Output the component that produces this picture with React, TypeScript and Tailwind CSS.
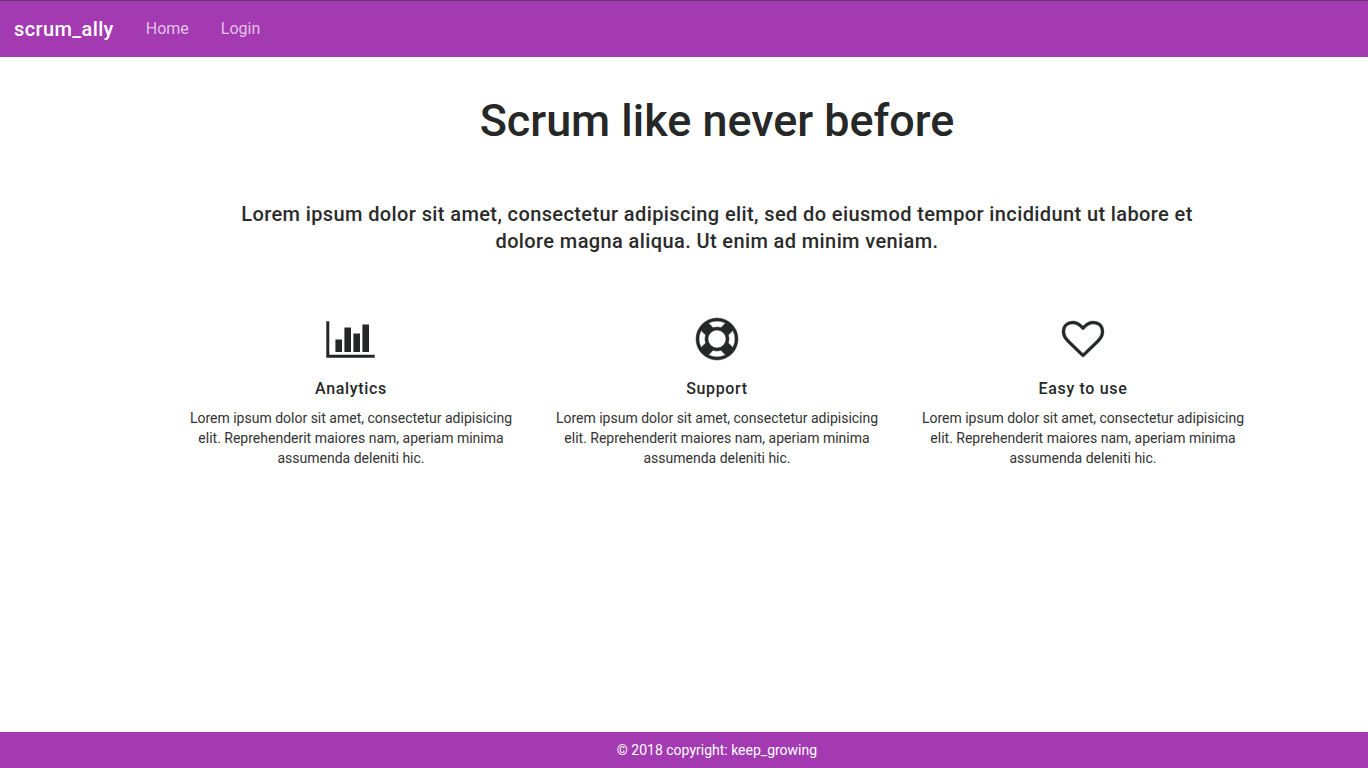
import type { ReactNode } from "react";

const blurb =
  "Lorem ipsum dolor sit amet, consectetur adipisicing elit. Reprehenderit maiores nam, aperiam minima assumenda deleniti hic.";

function BarChart() {
  return (
    <svg width="49" height="37" viewBox="0 0 49 37" fill="currentColor" className="mr-[2px]">
      <path d="M0.300 0.200h3v33.600h45.400v3H0.300zM9.400 18.400h6.600V31H9.400zM18.400 6.400h6.600V31h-6.600zM27.400 12.400h6.600V31h-6.600zM36.400 3.400h6.600V31h-6.600z" />
    </svg>
  );
}

function LifeRing() {
  return (
    <svg width="42" height="42" viewBox="0 0 1792 1792" fill="currentColor" stroke="currentColor" strokeWidth="20" className="mb-px overflow-visible">
      <path d="M896 0q182 0 348 71t286 191 191 286 71 348-71 348-191 286-286 191-348 71-348-71-286-191-191-286T0 896t71-348 191-286T548 71 896 0zm0 128q-190 0-361 90l194 194q82-28 167-28t167 28l194-194q-171-90-361-90zM218 1257l194-194q-28-82-28-167t28-167L218 535q-90 171-90 361t90 361zm678 407q190 0 361-90l-194-194q-82 28-167 28t-167-28l-194 194q171 90 361 90zm0-384q159 0 271.500-112.500T1280 896t-112.500-271.500T896 512 624.500 624.500 512 896t112.500 271.500T896 1280zm484-217l194 194q90-171 90-361t-90-361l-194 194q28 82 28 167t-28 167z" />
    </svg>
  );
}

function Heart() {
  return (
    <svg width="42" height="36" viewBox="0 0 1792 1536" fill="currentColor" stroke="currentColor" strokeWidth="16" className="mb-px overflow-visible">
      <path d="M1664 468q0-81-21.500-143t-55-98.500-81.500-59.500-94-31-98-8-112 25.500-110.500 64-86.500 72-60 61.500q-18 22-49 22t-49-22q-24-28-60-61.500t-86.500-72-110.500-64T478 128t-98 8-94 31-81.500 59.500-55 98.500T128 468q0 168 187 355l581 560 580-559q188-188 188-356zm128 0q0 221-229 450l-623 600q-18 18-44 18t-44-18L228 916q-10-8-27.500-26T145 824.500 77 727 23.500 606 0 468q0-220 127-344T478 0q62 0 126.500 21.500t120 58T820 148t76 68q36-36 76-68t95.500-68.500 120-58T1314 0q224 0 351 124t127 344z" />
    </svg>
  );
}

function Feature({ icon, title }: { icon: ReactNode; title: string }) {
  return (
    <section className="flex flex-col items-center text-center">
      <div className="flex h-[43px] items-center">{icon}</div>
      <h5 className="mt-[18px] text-[16px] leading-[20px] font-medium tracking-[0.65px]">{title}</h5>
      <p className="mt-[9px] w-[336px] text-[14px] leading-[20px] text-[#333333]">{blurb}</p>
    </section>
  );
}

export default function App() {
  return (
    <div className="flex h-screen flex-col overflow-hidden bg-white font-[Roboto,sans-serif] text-[#262828]">
      <nav className="flex h-[57px] shrink-0 items-center border-t border-[#6b3276] bg-[#a33ab2] pl-[14px] text-white">
        <a className="text-[20px] font-medium tracking-[0.37px]">scrum_ally</a>
        <a className="ml-8 text-[16px] text-white/70">Home</a>
        <a className="ml-8 text-[16px] text-white/70">Login</a>
      </nav>
      <main className="flex-1 pl-[168px] pr-[102px]">
        <h1 className="mt-[37px] text-center text-[44.9px] leading-[54px] font-medium">Scrum like never before</h1>
        <h4 className="mx-auto mt-[53px] w-[980px] text-center text-[20px] leading-[27px] font-medium tracking-[0.39px] text-[#2b2b2b]">
          Lorem ipsum dolor sit amet, consectetur adipiscing elit, sed do eiusmod tempor incididunt ut labore et dolore magna aliqua. Ut enim ad minim veniam.
        </h4>
        <div className="mt-[63px] grid grid-cols-3">
          <Feature icon={<BarChart />} title="Analytics" />
          <Feature icon={<LifeRing />} title="Support" />
          <Feature icon={<Heart />} title="Easy to use" />
        </div>
      </main>
      <footer className="flex h-[36px] shrink-0 items-center justify-center bg-[#a33ab2] pl-[66px] text-[14px] text-white">
        © 2018 copyright: keep_growing
      </footer>
    </div>
  );
}
